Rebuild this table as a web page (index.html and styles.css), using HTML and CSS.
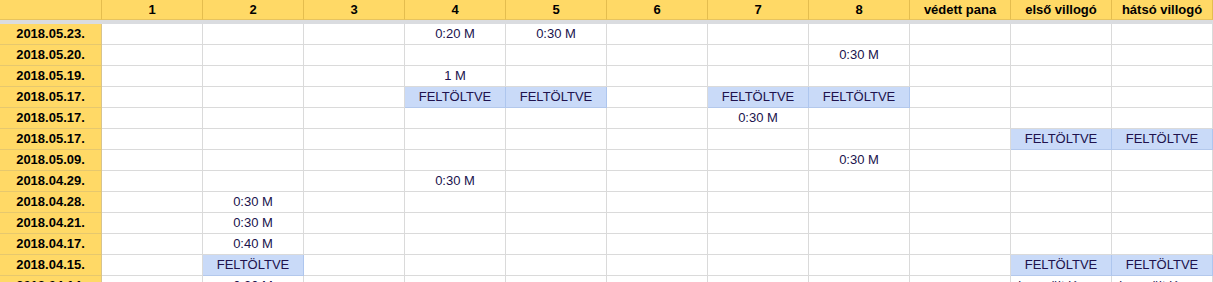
FILE: index.html
```html
<!DOCTYPE html>
<html lang="hu">
<head>
<meta charset="utf-8">
<title>Sheet</title>
<link rel="stylesheet" href="styles.css">
</head>
<body>
<div class="sheet">
  <div class="row head">
    <div class="cell"></div><div class="cell">1</div><div class="cell">2</div><div class="cell">3</div><div class="cell">4</div><div class="cell">5</div><div class="cell">6</div><div class="cell">7</div><div class="cell">8</div><div class="cell">védett pana</div><div class="cell">első villogó</div><div class="cell">hátsó villogó</div>
  </div>
  <div class="freeze"></div>
  <div class="row"><div class="cell date">2018.05.23.</div><div class="cell"></div><div class="cell"></div><div class="cell"></div><div class="cell">0:20 M</div><div class="cell">0:30 M</div><div class="cell"></div><div class="cell"></div><div class="cell"></div><div class="cell"></div><div class="cell"></div><div class="cell"></div></div>
  <div class="row"><div class="cell date">2018.05.20.</div><div class="cell"></div><div class="cell"></div><div class="cell"></div><div class="cell"></div><div class="cell"></div><div class="cell"></div><div class="cell"></div><div class="cell">0:30 M</div><div class="cell"></div><div class="cell"></div><div class="cell"></div></div>
  <div class="row"><div class="cell date">2018.05.19.</div><div class="cell"></div><div class="cell"></div><div class="cell"></div><div class="cell">1 M</div><div class="cell"></div><div class="cell"></div><div class="cell"></div><div class="cell"></div><div class="cell"></div><div class="cell"></div><div class="cell"></div></div>
  <div class="row"><div class="cell date">2018.05.17.</div><div class="cell"></div><div class="cell"></div><div class="cell"></div><div class="cell blue">FELTÖLTVE</div><div class="cell blue">FELTÖLTVE</div><div class="cell"></div><div class="cell blue">FELTÖLTVE</div><div class="cell blue">FELTÖLTVE</div><div class="cell"></div><div class="cell"></div><div class="cell"></div></div>
  <div class="row"><div class="cell date">2018.05.17.</div><div class="cell"></div><div class="cell"></div><div class="cell"></div><div class="cell"></div><div class="cell"></div><div class="cell"></div><div class="cell">0:30 M</div><div class="cell"></div><div class="cell"></div><div class="cell"></div><div class="cell"></div></div>
  <div class="row"><div class="cell date">2018.05.17.</div><div class="cell"></div><div class="cell"></div><div class="cell"></div><div class="cell"></div><div class="cell"></div><div class="cell"></div><div class="cell"></div><div class="cell"></div><div class="cell"></div><div class="cell blue">FELTÖLTVE</div><div class="cell blue">FELTÖLTVE</div></div>
  <div class="row"><div class="cell date">2018.05.09.</div><div class="cell"></div><div class="cell"></div><div class="cell"></div><div class="cell"></div><div class="cell"></div><div class="cell"></div><div class="cell"></div><div class="cell">0:30 M</div><div class="cell"></div><div class="cell"></div><div class="cell"></div></div>
  <div class="row"><div class="cell date">2018.04.29.</div><div class="cell"></div><div class="cell"></div><div class="cell"></div><div class="cell">0:30 M</div><div class="cell"></div><div class="cell"></div><div class="cell"></div><div class="cell"></div><div class="cell"></div><div class="cell"></div><div class="cell"></div></div>
  <div class="row"><div class="cell date">2018.04.28.</div><div class="cell"></div><div class="cell">0:30 M</div><div class="cell"></div><div class="cell"></div><div class="cell"></div><div class="cell"></div><div class="cell"></div><div class="cell"></div><div class="cell"></div><div class="cell"></div><div class="cell"></div></div>
  <div class="row"><div class="cell date">2018.04.21.</div><div class="cell"></div><div class="cell">0:30 M</div><div class="cell"></div><div class="cell"></div><div class="cell"></div><div class="cell"></div><div class="cell"></div><div class="cell"></div><div class="cell"></div><div class="cell"></div><div class="cell"></div></div>
  <div class="row"><div class="cell date">2018.04.17.</div><div class="cell"></div><div class="cell">0:40 M</div><div class="cell"></div><div class="cell"></div><div class="cell"></div><div class="cell"></div><div class="cell"></div><div class="cell"></div><div class="cell"></div><div class="cell"></div><div class="cell"></div></div>
  <div class="row"><div class="cell date">2018.04.15.</div><div class="cell"></div><div class="cell blue">FELTÖLTVE</div><div class="cell"></div><div class="cell"></div><div class="cell"></div><div class="cell"></div><div class="cell"></div><div class="cell"></div><div class="cell"></div><div class="cell blue">FELTÖLTVE</div><div class="cell blue">FELTÖLTVE</div></div>
  <div class="row"><div class="cell date">2018.04.14.</div><div class="cell"></div><div class="cell">0:30 M</div><div class="cell"></div><div class="cell"></div><div class="cell"></div><div class="cell"></div><div class="cell"></div><div class="cell"></div><div class="cell"></div><div class="cell">lemerült lámpa</div><div class="cell">lemerült lámpa</div></div>
</div>
</body>
</html>
```

FILE: styles.css
```css
html, body {
  margin: 0;
  padding: 0;
  background: #ffffff;
  overflow: hidden;
}
.sheet {
  width: 1213px;
  font-family: "Liberation Sans", Arial, sans-serif;
  font-size: 13px;
  color: #20124d;
}
.row {
  display: grid;
  grid-template-columns: 102px repeat(11, 101px);
  height: 21px;
}
.cell {
  box-sizing: border-box;
  border-right: 1px solid #dadada;
  border-bottom: 1px solid #dadada;
  text-align: center;
  line-height: 20px;
  white-space: nowrap;
  overflow: hidden;
}
.head {
  height: 20px;
}
.head .cell {
  background: #ffd966;
  border-right: 1px solid #e4bd4e;
  border-bottom: 1px solid #e7c35e;
  font-weight: bold;
  color: #000000;
  line-height: 19px;
}
.freeze {
  height: 4px;
  background: #dadce0;
}
.date {
  background: #ffd966;
  font-weight: bold;
  color: #000000;
  border-right-color: #d7c48e;
  border-bottom-color: #e6c86e;
}
.blue {
  background: #c9daf8;
  border-right-color: #aec6ee;
  border-bottom-color: #b3c8ec;
}
```
